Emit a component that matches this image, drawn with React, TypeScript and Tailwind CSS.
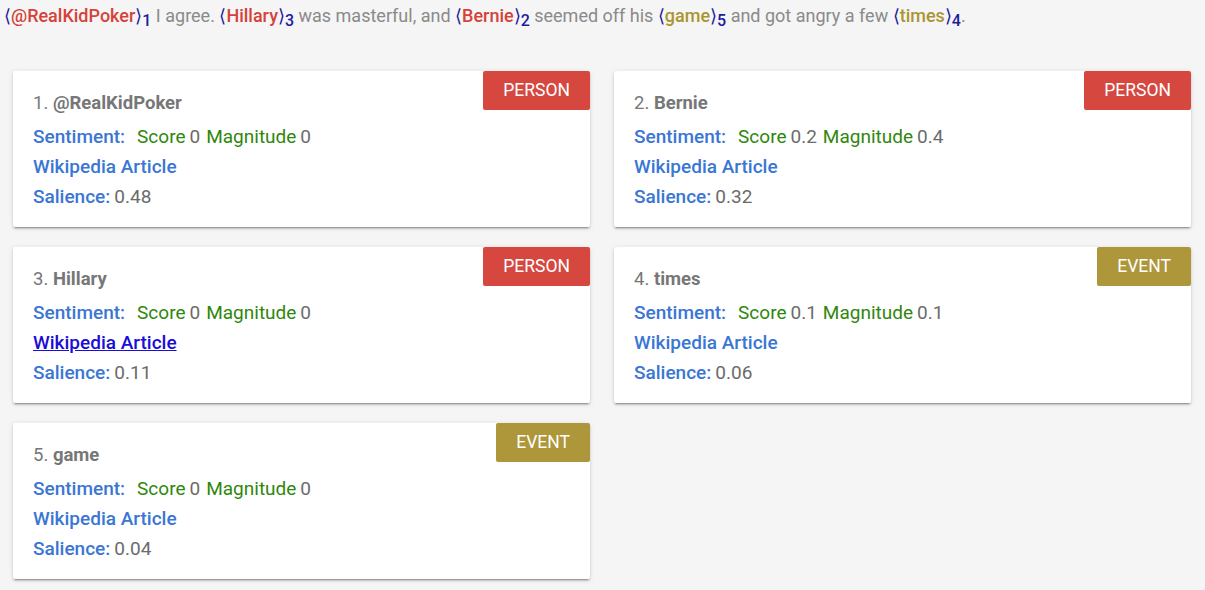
import React from "react";

type Entity = {
  n: number;
  name: string;
  type: "PERSON" | "EVENT";
  score: string;
  magnitude: string;
  salience: string;
  visited?: boolean;
};

const entities: Entity[] = [
  { n: 1, name: "@RealKidPoker", type: "PERSON", score: "0", magnitude: "0", salience: "0.48" },
  { n: 2, name: "Bernie", type: "PERSON", score: "0.2", magnitude: "0.4", salience: "0.32" },
  { n: 3, name: "Hillary", type: "PERSON", score: "0", magnitude: "0", salience: "0.11", visited: true },
  { n: 4, name: "times", type: "EVENT", score: "0.1", magnitude: "0.1", salience: "0.06" },
  { n: 5, name: "game", type: "EVENT", score: "0", magnitude: "0", salience: "0.04" },
];

const Mention = ({ text, n, kind }: { text: string; n: number; kind: "PERSON" | "EVENT" }) => (
  <span>
    <span className="text-[#1b1b9e]">⟨</span>
    <span className={kind === "PERSON" ? "font-medium text-[#d6423a]" : "font-medium text-[#ab9531]"}>{text}</span>
    <span className="text-[#1b1b9e]">⟩</span>
    <sub className="text-[#1b1b9e] font-medium text-[16px]">{n}</sub>
  </span>
);

const EntityCard = ({ e }: { e: Entity }) => (
  <div className="relative bg-white rounded-[2px] pt-[21px] pb-[15px] px-5 shadow-[0_2px_2px_0_rgba(0,0,0,0.14),0_3px_1px_-2px_rgba(0,0,0,0.2),0_1px_5px_0_rgba(0,0,0,0.12)]">
    <div
      className={
        "absolute top-0 right-0 h-[39px] flex items-center px-5 text-white text-[17.5px] rounded-[2px] " +
        (e.type === "PERSON" ? "bg-[#d5473f]" : "bg-[#ad973a]")
      }
    >
      {e.type}
    </div>
    <div className="text-[18.5px] leading-[22px] text-[#777777]">
      {e.n}. <span className="font-bold">{e.name}</span>
    </div>
    <div className="mt-2 text-[19px] leading-[30px]">
      <div className="flex">
        <span className="font-medium text-[#3a76d4]">Sentiment:</span>
        <span className="ml-3 text-[#2f870c]">Score</span>
        <span className="ml-1 text-[#6b6b6b]">{e.score}</span>
        <span className="ml-[6px] text-[#2f870c]">Magnitude</span>
        <span className="ml-1 text-[#6b6b6b]">{e.magnitude}</span>
      </div>
      <div>
        <a
          href="#"
          className={e.visited ? "font-medium text-[#1a0dd8] underline" : "font-medium text-[#3a76d4] no-underline"}
        >
          Wikipedia Article
        </a>
      </div>
      <div>
        <span className="font-medium text-[#3a76d4]">Salience:</span>
        <span className="ml-1 text-[#6b6b6b]">{e.salience}</span>
      </div>
    </div>
  </div>
);

export default function App() {
  return (
    <div className="min-h-[590px] bg-[#f5f5f5] font-['Roboto',sans-serif]">
      <div className="pl-1 pt-[2px] text-[18px] leading-[28px] text-[#8a8a8a]">
        <Mention text="@RealKidPoker" n={1} kind="PERSON" /> I agree. <Mention text="Hillary" n={3} kind="PERSON" /> was
        masterful, and <Mention text="Bernie" n={2} kind="PERSON" /> seemed off his{" "}
        <Mention text="game" n={5} kind="EVENT" /> and got angry a few <Mention text="times" n={4} kind="EVENT" />.
      </div>
      <div className="grid grid-cols-[577px_577px] gap-x-6 gap-y-5 pl-[13px] pt-[41px] pb-[11px]">
        {entities.map((e) => (
          <EntityCard key={e.n} e={e} />
        ))}
      </div>
    </div>
  );
}
